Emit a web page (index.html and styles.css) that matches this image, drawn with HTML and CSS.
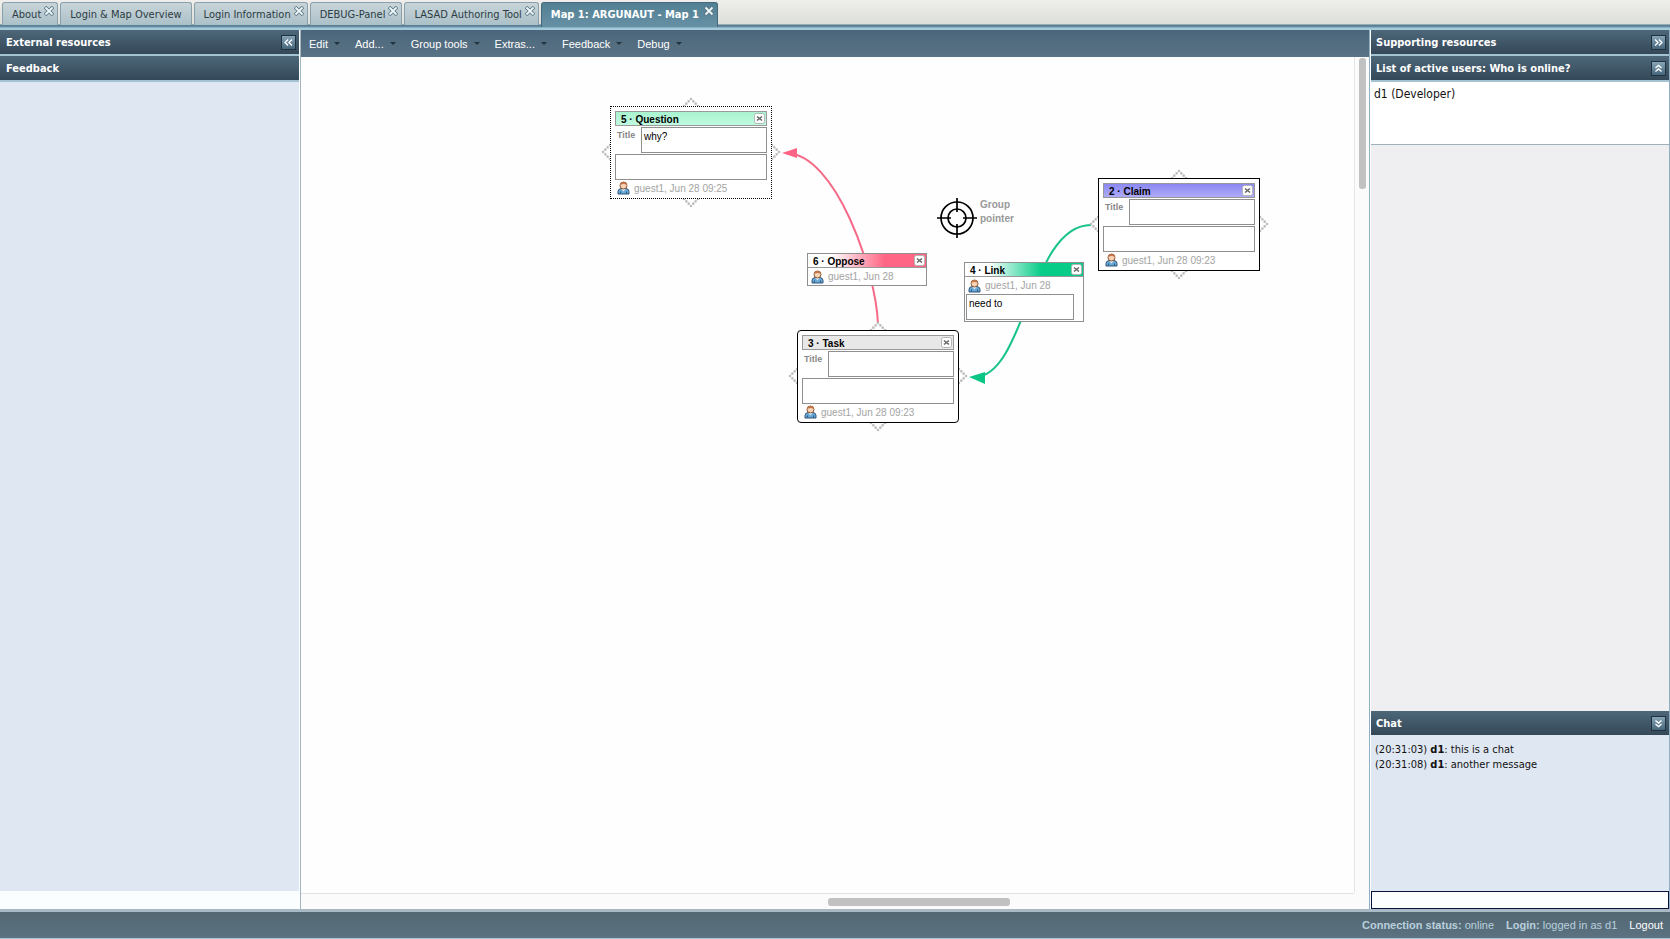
FILE: index.html
```html
<!DOCTYPE html>
<html lang="en">
<head>
  <meta charset="UTF-8">
  <meta name="viewport" content="width=device-width, initial-scale=1.0">
  <title>LASAD</title>
  <link rel="stylesheet" href="styles.css">
</head>
<body>
  <svg class="defs" width="0" height="0" aria-hidden="true">
    <symbol id="user" viewBox="0 0 13 14">
      <path d="M1 13V10.5Q1 8 4 7.5H9Q12 8 12 10.5V13Z" fill="#6aa9d6" stroke="#2c5478"/>
      <path d="M4.5 8L6.5 10.5L8.5 8Z" fill="#e4f1fa"/>
      <circle cx="6.5" cy="4.5" r="3.5" fill="#f8d4b4" stroke="#8a5536"/>
      <path d="M3 4Q3 1 6.500 1T10 4Q8 3 6.500 3T3 4Z" fill="#c0764a"/>
      <path d="M3.500 12.500V10.500M9.500 12.500V10.500" stroke="#2c5478"/>
    </symbol>
    <symbol id="close" viewBox="0 0 10 10">
      <path d="M1 1L9 9M9 1L1 9" stroke="#5d7785" stroke-width="3.600"/>
      <path d="M1.500 1.500L8.500 8.500M8.500 1.500L1.500 8.500" stroke="#eef7fa" stroke-width="1.800"/>
    </symbol>
    <symbol id="box-close" viewBox="0 0 11 11">
      <rect x=".5" y=".5" width="10" height="10" rx="2" fill="#fff" stroke="#b4b4b4"/>
      <path d="M3 3.500L8 7.500M8 3.500L3 7.500" stroke="#666" stroke-width="1.600"/>
    </symbol>
    <symbol id="chevrons" viewBox="0 0 15 15">
      <path d="M7 4L3.500 7.500L7 11M11.500 4L8 7.500L11.500 11" fill="none" stroke="#fff" stroke-width="1.500"/>
    </symbol>
    <symbol id="chevron" viewBox="0 0 15 15">
      <path d="M4 7L7.500 4L11 7M4 11L7.500 8L11 11" fill="none" stroke="#fff" stroke-width="1.500"/>
    </symbol>
    <symbol id="port" viewBox="0 0 18 18">
      <path d="M9 2L16 9L9 16L2 9Z" fill="none" stroke="#bcbcbc" stroke-width="2.600" stroke-linecap="round" stroke-dasharray="0 3.300"/>
    </symbol>
  </svg>

  <nav class="tabs">
    <div class="tab closable"><button>About</button><button class="tab-close" aria-label="Close About"><svg><use href="#close"/></svg></button></div>
    <div class="tab"><button>Login &amp; Map Overview</button></div>
    <div class="tab closable"><button>Login Information</button><button class="tab-close" aria-label="Close Login Information"><svg><use href="#close"/></svg></button></div>
    <div class="tab closable"><button>DEBUG-Panel</button><button class="tab-close" aria-label="Close DEBUG-Panel"><svg><use href="#close"/></svg></button></div>
    <div class="tab closable"><button>LASAD Authoring Tool</button><button class="tab-close" aria-label="Close LASAD Authoring Tool"><svg><use href="#close"/></svg></button></div>
    <div class="tab closable active"><button>Map 1: ARGUNAUT - Map 1</button><button class="tab-close" aria-label="Close Map 1"><svg><use href="#close"/></svg></button></div>
  </nav>

  <main class="workspace">
    <aside class="side side-left">
      <header class="panel-head"><h2>External resources</h2><button class="tool" aria-label="Collapse"><svg><use href="#chevrons"/></svg></button></header>
      <header class="panel-head"><h2>Feedback</h2></header>
      <div class="feedback"></div>
    </aside>

    <section class="center">
      <div class="menubar">
        <button>Edit</button>
        <button>Add...</button>
        <button>Group tools</button>
        <button>Extras...</button>
        <button>Feedback</button>
        <button>Debug</button>
      </div>
      <div class="scroller">
        <div class="map">
          <svg class="links" viewBox="301 57 1052 837" width="1052" height="837" fill="none">
            <path d="M878 324C876 270 835 153 786 153" stroke="#f56a87" stroke-width="2"/>
            <path d="M782 153L797 148V158Z" fill="#fb6484"/>
            <path d="M1091 225C1030 225 1025 377 975 377" stroke="#17c388" stroke-width="2"/>
            <path d="M969 377L985 372V384Z" fill="#0bc684"/>
          </svg>

          <article class="box question">
            <svg class="port top"><use href="#port"/></svg><svg class="port east"><use href="#port"/></svg><svg class="port bottom"><use href="#port"/></svg><svg class="port west"><use href="#port"/></svg>
            <div class="box-body">
              <header class="box-head"><h3>5 · Question</h3><button aria-label="Delete"><svg><use href="#box-close"/></svg></button></header>
              <div class="title-row"><label for="t5">Title</label><textarea id="t5">why?</textarea></div>
              <textarea aria-label="Question text"></textarea>
              <footer><svg><use href="#user"/></svg>guest1, Jun 28 09:25</footer>
            </div>
          </article>

          <article class="box claim">
            <svg class="port top"><use href="#port"/></svg><svg class="port east"><use href="#port"/></svg><svg class="port bottom"><use href="#port"/></svg><svg class="port west"><use href="#port"/></svg>
            <div class="box-body">
              <header class="box-head"><h3>2 · Claim</h3><button aria-label="Delete"><svg><use href="#box-close"/></svg></button></header>
              <div class="title-row"><label for="t2">Title</label><textarea id="t2"></textarea></div>
              <textarea aria-label="Claim text"></textarea>
              <footer><svg><use href="#user"/></svg>guest1, Jun 28 09:23</footer>
            </div>
          </article>

          <article class="box task">
            <svg class="port top"><use href="#port"/></svg><svg class="port east"><use href="#port"/></svg><svg class="port bottom"><use href="#port"/></svg><svg class="port west"><use href="#port"/></svg>
            <div class="box-body">
              <header class="box-head"><h3>3 · Task</h3><button aria-label="Delete"><svg><use href="#box-close"/></svg></button></header>
              <div class="title-row"><label for="t3">Title</label><textarea id="t3"></textarea></div>
              <textarea aria-label="Task text"></textarea>
              <footer><svg><use href="#user"/></svg>guest1, Jun 28 09:23</footer>
            </div>
          </article>

          <article class="relation oppose">
            <header class="box-head"><h3>6 · Oppose</h3><button aria-label="Delete"><svg><use href="#box-close"/></svg></button></header>
            <footer><svg><use href="#user"/></svg>guest1, Jun 28</footer>
          </article>

          <article class="relation link">
            <header class="box-head"><h3>4 · Link</h3><button aria-label="Delete"><svg><use href="#box-close"/></svg></button></header>
            <footer><svg><use href="#user"/></svg>guest1, Jun 28</footer>
            <textarea aria-label="Link text">need to</textarea>
          </article>

          <div class="pointer">
            <svg viewBox="0 0 42 42" fill="none" stroke="#000" stroke-width="1.700">
              <circle cx="21" cy="21" r="16"/><circle cx="21" cy="21" r="9"/>
              <path d="M21 1V15M21 27V41M1 21H15M27 21H41"/>
            </svg>
            <span>Group<br>pointer</span>
          </div>
        </div>
        <div class="vbar"><div class="thumb"></div></div>
        <div class="hbar"><div class="thumb"></div></div>
      </div>
    </section>

    <aside class="side side-right">
      <header class="panel-head"><h2>Supporting resources</h2><button class="tool" aria-label="Collapse"><svg class="flip"><use href="#chevrons"/></svg></button></header>
      <header class="panel-head"><h2>List of active users: Who is online?</h2><button class="tool" aria-label="Collapse list"><svg><use href="#chevron"/></svg></button></header>
      <div class="users">d1 (Developer)</div>
      <div class="spacer"></div>
      <header class="panel-head chat-head"><h2>Chat</h2><button class="tool" aria-label="Collapse chat"><svg class="flip"><use href="#chevron"/></svg></button></header>
      <div class="chat">
        <p>(20:31:03) <b>d1</b>: this is a chat</p>
        <p>(20:31:08) <b>d1</b>: another message</p>
      </div>
      <input class="chat-input" type="text" aria-label="Chat message">
    </aside>
  </main>

  <footer class="status">
    <span><b>Connection status:</b> online</span>
    <span><b>Login:</b> logged in as d1</span>
    <a href="#">Logout</a>
  </footer>
</body>
</html>
```
FILE: styles.css
```css
* {
  box-sizing: border-box;
}
body {
  margin: 0;
  height: 100vh;
  display: flex;
  flex-direction: column;
  overflow: hidden;
  font-family: "DejaVu Sans Condensed", "DejaVu Sans", sans-serif;
  font-size: 11px;
  color: #111;
  background: #fff;
}
h2, h3, p { margin: 0; }
button {
  font: inherit;
  color: inherit;
  background: none;
  border: none;
  padding: 0;
  cursor: pointer;
}
svg { display: block; }
.defs { position: absolute; }

/* tabs */
.tabs {
  display: flex;
  gap: 2px;
  height: 30px;
  padding: 2px 2px 0;
  background: linear-gradient(#efeeec, #dcdfd9 24px, #52778c 25px, #6b93a8 27px, #a5cbdb 28px, #a5cbdb);
}
.tab {
  display: flex;
  position: relative;
  height: 23px;
  padding: 0 9px;
  border: 1px solid #8aa0aa;
  border-bottom: none;
  border-radius: 3px 3px 0 0;
  background: linear-gradient(#c8d5d9, #abc0c8);
  color: #2c3c44;
}
.tab.closable { padding-right: 16px; }
.tab.active {
  height: 25px;
  padding-right: 18px;
  color: #fff;
  font-weight: bold;
  border-color: #46697d;
  background: linear-gradient(#528093, #6790a5);
}
.tab button { height: 23px; }
.tab .tab-close {
  position: absolute;
  top: 3px;
  right: 3px;
  height: 10px;
}
.tab-close svg { width: 10px; height: 10px; }

/* columns */
.workspace {
  flex: 1;
  min-height: 0;
  display: grid;
  grid-template-columns: 301px 1fr 301px;
}
.side, .center {
  display: flex;
  flex-direction: column;
  min-width: 0;
  min-height: 0;
}
.side-left {
  border-right: 1px solid #a0b4c2;
  padding-right: 1px;
}
.panel-head {
  display: flex;
  justify-content: space-between;
  align-items: center;
  height: 26px;
  flex: none;
  padding: 1px 3px 0 6px;
  color: #fff;
  background: linear-gradient(#4d6779, #344858);
  border-bottom: 2px solid #a3c3d3;
}
.panel-head h2 { font-size: 11px; }
.tool {
  width: 15px;
  height: 15px;
  background: linear-gradient(#88a5b7, #45657a);
  border: 1px solid #20323f;
}
.tool svg { width: 13px; height: 13px; }
.flip { transform: rotate(180deg); }
.feedback {
  flex: 1;
  background: #dfe7f2;
  border-bottom: 18px solid #fafeff;
}

/* menu */
.menubar {
  display: flex;
  gap: 15px;
  height: 27px;
  flex: none;
  padding: 0 8px;
  color: #fff;
  font-family: "Liberation Sans", Arial, sans-serif;
  background: linear-gradient(#4b667b, #5a7385);
}
.menubar button {
  display: flex;
  align-items: center;
  gap: 6px;
}
.menubar button::after {
  content: "";
  border: 3px solid transparent;
  border-top-color: #24343f;
  border-bottom: none;
}
.scroller {
  flex: 1;
  min-height: 0;
  display: grid;
  grid-template-columns: 1fr 15px;
  grid-template-rows: 1fr 16px;
  background: #fbfbfc;
}
.map {
  position: relative;
  overflow: hidden;
  background: #fefefe;
  font-family: "Liberation Sans", Arial, sans-serif;
  font-size: 10px;
}
.vbar {
  padding: 1px 3px 1px 4px;
  border-left: 1px solid #e6e6e8;
}
.hbar {
  padding: 4px 0 3px;
  border-top: 1px solid #e3e1e4;
}
.thumb {
  background: #c1c1c1;
  border-radius: 3px;
}
.vbar .thumb { height: 131px; }
.hbar .thumb {
  height: 8px;
  width: 182px;
  margin-left: 50%;
}

/* boxes on the map */
.links { position: absolute; left: 0; top: 0; }
.box {
  position: absolute;
  width: 162px;
}
.question { left: 309px; top: 49px; }
.claim { left: 797px; top: 121px; }
.task { left: 496px; top: 273px; }
.box-body {
  position: relative;
  display: flex;
  flex-direction: column;
  gap: 1px;
  padding: 4px;
  height: 93px;
  border: 1px solid #000;
  background: #fff;
}
.question .box-body { border-style: dotted; }
.task .box-body { border-radius: 4px; }
.port {
  position: absolute;
  width: 18px;
  height: 18px;
}
.port.top { left: 72px; top: -9px; }
.port.bottom { left: 72px; bottom: -9px; }
.port.west { left: -9px; top: 37px; }
.port.east { right: -9px; top: 37px; }
.box-head {
  display: flex;
  justify-content: space-between;
  align-items: center;
  height: 15px;
  flex: none;
  padding: 0 1px 0 5px;
  border: 1px solid #999;
}
.box-head h3 {
  padding-top: 2px;
  font-size: 10px;
  color: #000;
}
.box-head svg { width: 11px; height: 11px; }
.question .box-head { background: linear-gradient(#a9f3d0, #c0fbe0); }
.claim .box-head { background: linear-gradient(#8b88f2, #aeacf8); }
.task .box-head { background: #e8e8e8; }
.title-row {
  display: flex;
  justify-content: space-between;
}
.title-row label {
  padding: 3px 0 0 2px;
  font-size: 9px;
  font-weight: bold;
  color: #888;
}
textarea {
  display: block;
  width: 100%;
  height: 26px;
  flex: none;
  padding: 3px 2px;
  border: 1px solid #8f8f8f;
  background: #fff;
  font: inherit;
  color: #000;
  resize: none;
  overflow: hidden;
}
.title-row textarea { width: 126px; }
.map footer {
  display: flex;
  align-items: center;
  gap: 4px;
  height: 17px;
  padding-left: 2px;
  color: #a3a3a3;
}
.map footer svg { width: 13px; height: 14px; }
.relation {
  position: absolute;
  width: 120px;
  border: 1px solid #909090;
  background: #fff;
}
.relation .box-head { border-width: 0 0 1px; height: 14px; }
.relation footer { padding-left: 3px; }
.oppose { left: 506px; top: 196px; }
.oppose .box-head { background: linear-gradient(90deg, #fff 20%, #ff6685 65%); }
.link { left: 663px; top: 205px; }
.link .box-head { background: linear-gradient(90deg, #fff 20%, #07cc88 65%); }
.link textarea {
  width: 108px;
  margin: 0 0 1px 1px;
}
.pointer {
  position: absolute;
  left: 635px;
  top: 140px;
  display: flex;
  gap: 2px;
  color: #999;
  font-weight: bold;
  line-height: 14px;
}
.pointer svg { width: 42px; height: 42px; }
.pointer span { padding-top: 1px; }

/* right column */
.side-right {
  border-left: 1px solid #8fb0c2;
  border-right: 1px solid #8fb0c2;
  padding-left: 1px;
}
.side-right .panel-head { padding-left: 5px; }
.users {
  height: 63px;
  padding: 5px 3px;
  font-size: 12px;
  border-bottom: 1px solid #9fb0ba;
}
.spacer {
  flex: 1;
  background: #efeff1;
}
.panel-head.chat-head {
  height: 24px;
  border-bottom: none;
}
.chat {
  height: 156px;
  padding: 7px 4px;
  line-height: 15px;
  background: #dfe7f2;
}
.chat-input {
  width: 100%;
  height: 18px;
  border: 1px solid #06123a;
  background: #fcffff;
  font: inherit;
}
.status {
  display: flex;
  justify-content: flex-end;
  align-items: center;
  gap: 12px;
  height: 30px;
  padding-right: 7px;
  border-top: 3px solid #a9bac5;
  border-bottom: 1px solid #a8c6d8;
  background: linear-gradient(#536771, #5c7282);
  color: #b9d0dd;
  font-family: "Liberation Sans", Arial, sans-serif;
}
.status a {
  color: #fff;
  text-decoration: none;
}
```
